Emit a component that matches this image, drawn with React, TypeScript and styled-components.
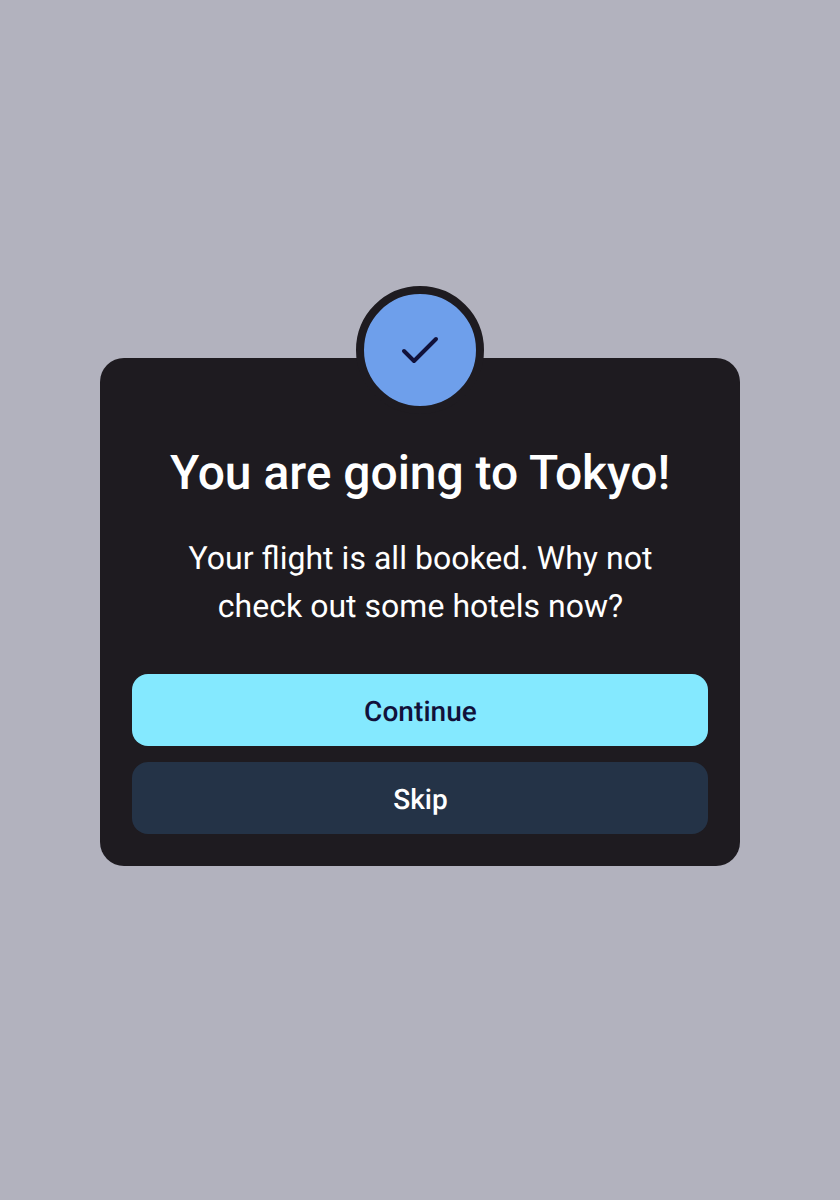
import React from "react";
import styled, { createGlobalStyle } from "styled-components";

const GlobalStyle = createGlobalStyle`
  * { box-sizing: border-box; }
  body {
    margin: 0;
    background: #b2b2be;
    font-family: Roboto, sans-serif;
    text-rendering: geometricPrecision;
    -webkit-font-smoothing: antialiased;
  }
`;

const Screen = styled.main`
  min-height: 1200px;
  display: flex;
  flex-direction: column;
  align-items: center;
  padding-top: 358px;
`;

const Dialog = styled.section`
  width: 640px;
  height: 508px;
  padding: 0 32px 32px;
  border-radius: 24px;
  background: #1e1b20;
  color: #fff;
  display: flex;
  flex-direction: column;
  align-items: center;
`;

const Badge = styled.div`
  flex: none;
  width: 128px;
  height: 128px;
  margin-top: -72px;
  border: 8px solid #1e1b20;
  border-radius: 50%;
  background: #6e9feb;
  color: #11113a;
  display: flex;
  align-items: center;
  justify-content: center;
`;

const Title = styled.h1`
  margin: 27px 0 0;
  font-size: 48px;
  line-height: 64px;
  font-weight: 500;
  letter-spacing: -0.04px;
  white-space: nowrap;
`;

const Message = styled.p`
  margin: 29px 0 0;
  width: 500px;
  padding-left: 1px;
  font-size: 32px;
  line-height: 48px;
  word-spacing: 0.1px;
  text-align: center;
`;

const Actions = styled.div`
  align-self: stretch;
  margin-top: auto;
  display: flex;
  flex-direction: column;
  gap: 16px;
`;

const Button = styled.button<{ $primary?: boolean }>`
  height: 72px;
  padding: 4px 0 0 1px;
  border: 0;
  border-radius: 16px;
  background: ${(p) => (p.$primary ? "#84e9ff" : "#243347")};
  color: ${(p) => (p.$primary ? "#11113a" : "#fff")};
  font: 500 28px/40px Roboto, sans-serif;
  letter-spacing: 0.06px;
  text-rendering: inherit;
`;

export default function App() {
  return (
    <>
      <GlobalStyle />
      <Screen>
        <Dialog role="dialog" aria-labelledby="dialog-title">
          <Badge>
            <svg width="48" height="48" viewBox="0 0 24 24" fill="none" stroke="currentColor" strokeWidth="2" strokeLinecap="round" strokeLinejoin="round">
              <path d="M4 12.5 9 17.5 20 6.5" />
            </svg>
          </Badge>
          <Title id="dialog-title">You are going to Tokyo!</Title>
          <Message>Your flight is all booked. Why not check out some hotels now?</Message>
          <Actions>
            <Button $primary>Continue</Button>
            <Button>Skip</Button>
          </Actions>
        </Dialog>
      </Screen>
    </>
  );
}
